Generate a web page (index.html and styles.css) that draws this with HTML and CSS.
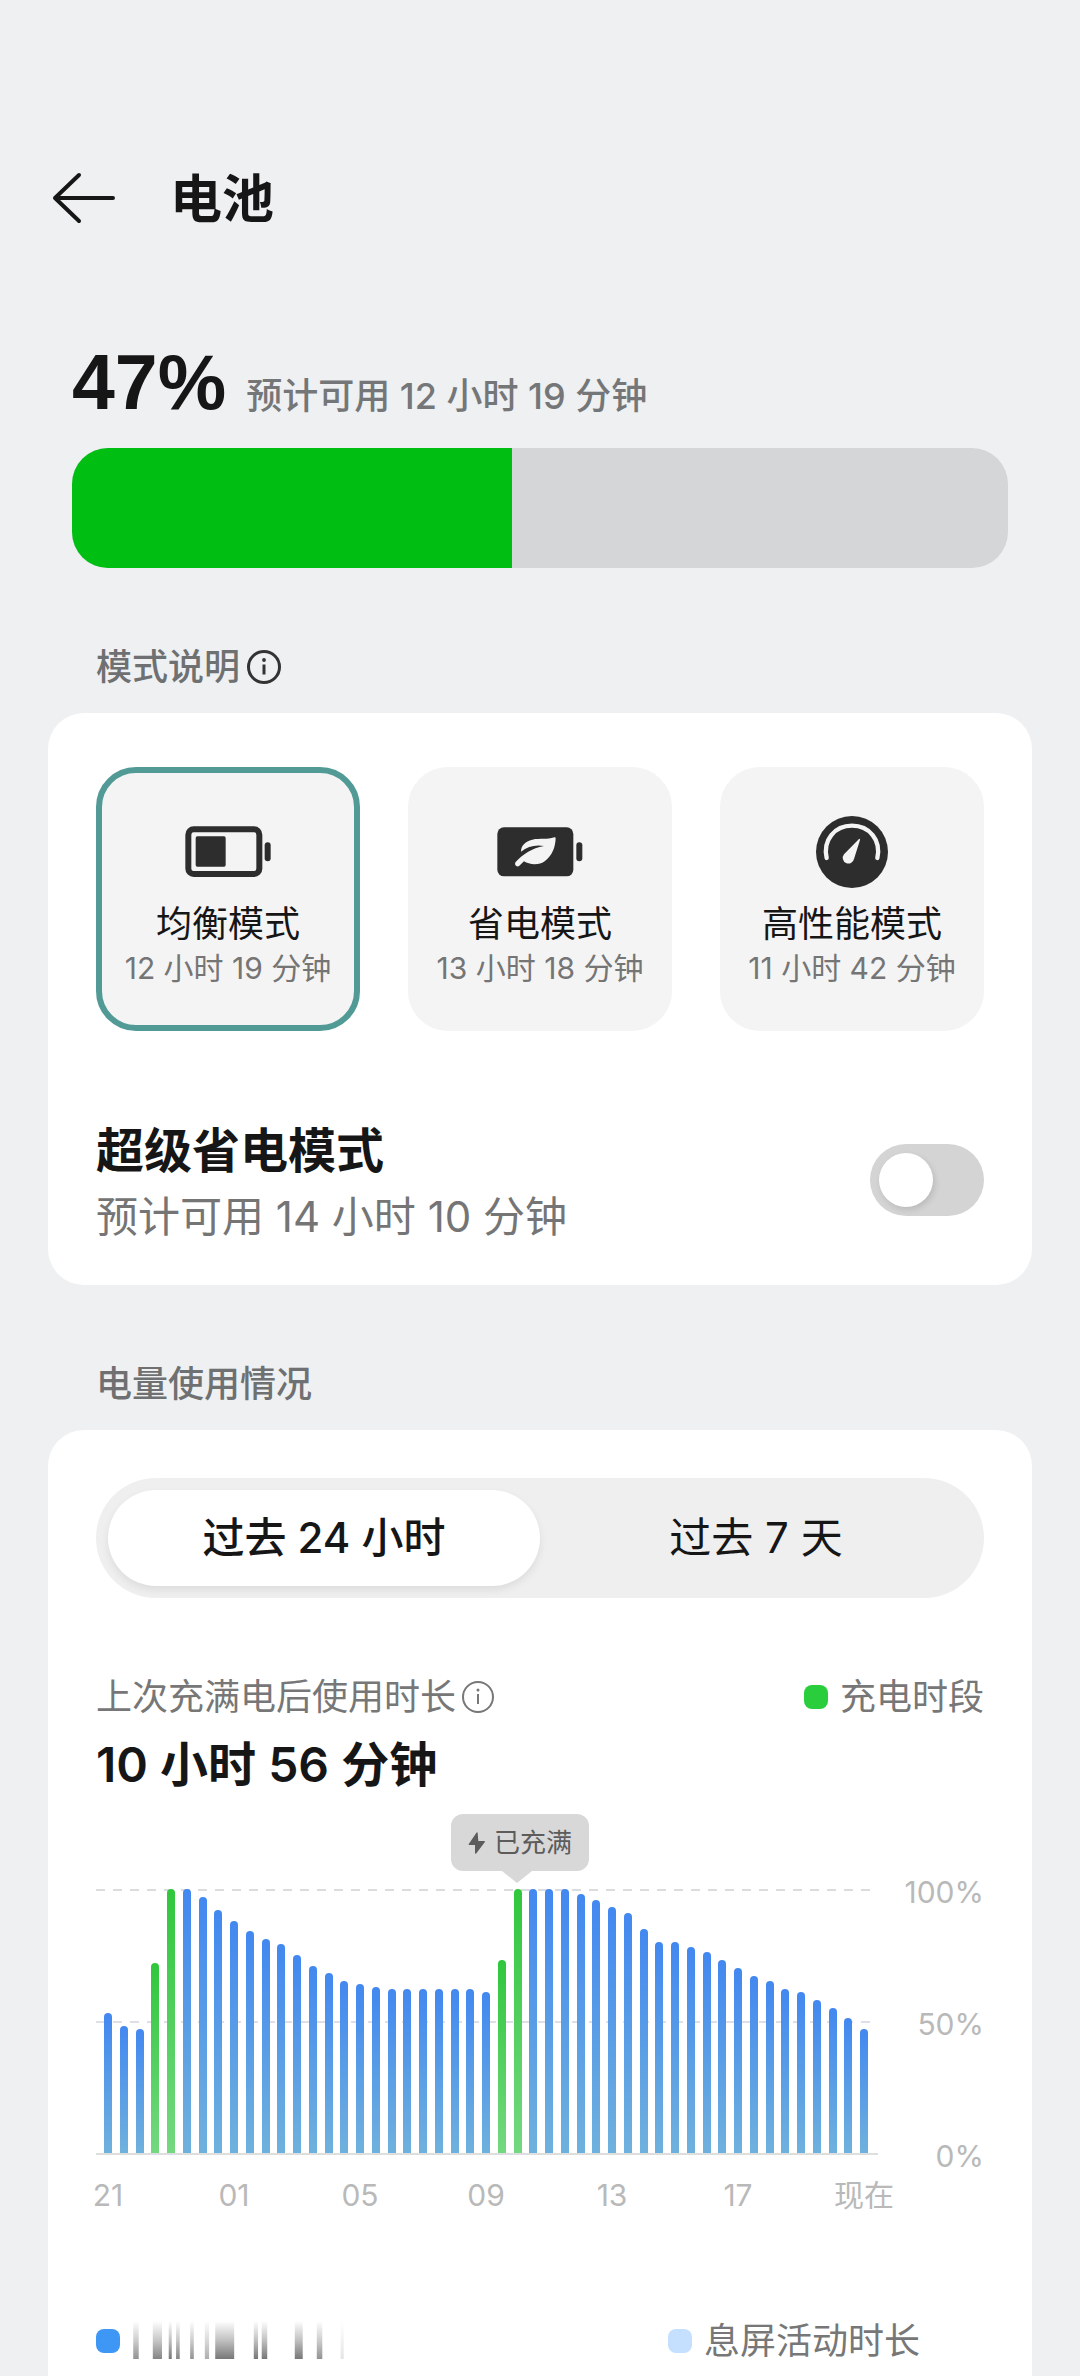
FILE: index.html
```html
<!DOCTYPE html>
<html lang="zh-CN">
<head>
<meta charset="utf-8">
<meta name="viewport" content="width=device-width, initial-scale=1">
<title>电池</title>
<link rel="stylesheet" href="styles.css">
</head>
<body>
<header class="topbar">
  <button class="icon-button back" type="button" aria-label="返回">
    <svg width="64" height="54" viewBox="0 0 64 54" fill="none" stroke="#161616" stroke-width="4" stroke-linecap="round" stroke-linejoin="round"><path d="M27 4 3 27l24 23M3 27h58"/></svg>
  </button>
  <h1 class="page-title">电池</h1>
</header>

<main class="content">
  <section class="level">
    <p class="level-text"><strong class="level-value">47%</strong><span class="level-note">预计可用 12 小时 19 分钟</span></p>
    <div class="level-bar" role="img" aria-label="电量 47%"><div class="level-fill" style="width:47%"></div></div>
  </section>

  <div class="section-head">
    <h2 class="section-title">模式说明</h2>
    <button class="icon-button" type="button" aria-label="模式说明信息">
      <svg width="36" height="36" viewBox="0 0 36 36" fill="none" stroke="#333" stroke-width="3"><circle cx="18" cy="18" r="15.5"/><path d="M18 15.500v10"/><circle cx="18" cy="11" r="1.900" fill="#333" stroke="none"/></svg>
    </button>
  </div>

  <section class="card">
    <div class="modes">
      <label class="mode">
        <input class="mode-input" type="radio" name="mode" checked>
        <span class="mode-icon">
          <svg width="86" height="52" viewBox="49 74 258 156"><rect x="59" y="84" width="213" height="134" rx="16" fill="none" stroke="#2d2d2d" stroke-width="18"/><rect x="81" y="105" width="90" height="91" rx="5" fill="#2d2d2d"/><rect x="288" y="123" width="18" height="57" rx="9" fill="#2d2d2d"/></svg>
        </span>
        <span class="mode-name">均衡模式</span>
        <span class="mode-time">12 小时 19 分钟</span>
      </label>
      <label class="mode">
        <input class="mode-input" type="radio" name="mode">
        <span class="mode-icon">
          <svg width="86" height="52" viewBox="56 74 258 156"><rect x="57" y="78" width="228" height="147" rx="20" fill="#2d2d2d"/><rect x="294" y="123" width="18" height="57" rx="9" fill="#2d2d2d"/><path fill="#f4f4f4" d="M228 108C206 116 186 110 162 115 140 120 128 133 128 151 148 135 172 129 197 134 160 141 136 157 112 182 106 189 116 200 123 193L137 180C153 191 184 192 200 179 222 162 231 138 232 110Q231 107 228 108Z"/></svg>
        </span>
        <span class="mode-name">省电模式</span>
        <span class="mode-time">13 小时 18 分钟</span>
      </label>
      <label class="mode">
        <input class="mode-input" type="radio" name="mode">
        <span class="mode-icon">
          <svg width="72" height="72" viewBox="1008 48 216 216"><circle cx="1116" cy="156" r="108" fill="#2d2d2d"/><path d="M1040 174C1028 120 1064 77 1116 77S1204 120 1192 174" fill="none" stroke="#f4f4f4" stroke-width="13" stroke-linecap="round"/><path fill="#f4f4f4" d="M1137 117Q1140 115 1140 120L1122 177A17 17 0 1 1 1092 163Z"/></svg>
        </span>
        <span class="mode-name">高性能模式</span>
        <span class="mode-time">11 小时 42 分钟</span>
      </label>
    </div>

    <label class="saver">
      <span class="saver-text">
        <span class="saver-title">超级省电模式</span>
        <span class="saver-note">预计可用 14 小时 10 分钟</span>
      </span>
      <input class="switch" type="checkbox" role="switch">
    </label>
  </section>

  <div class="section-head usage-head">
    <h2 class="section-title">电量使用情况</h2>
  </div>

  <section class="card usage">
    <div class="segments" role="tablist">
      <button class="segment active" type="button" role="tab" aria-selected="true">过去 24 小时</button>
      <button class="segment" type="button" role="tab" aria-selected="false">过去 7 天</button>
    </div>

    <div class="summary">
      <div class="summary-label">
        <span>上次充满电后使用时长</span>
        <button class="icon-button" type="button" aria-label="使用时长信息">
          <svg width="36" height="36" viewBox="0 0 36 36" fill="none" stroke="#777" stroke-width="2"><circle cx="18" cy="18" r="15"/><path d="M18 15v10"/><circle cx="18" cy="11" r="1.500" fill="#777" stroke="none"/></svg>
        </button>
      </div>
      <div class="legend"><span class="swatch charging"></span><span>充电时段</span></div>
    </div>
    <p class="summary-value">10 小时 56 分钟</p>

    <div class="chart">
      <div class="plot">
        <svg class="grid-lines" aria-hidden="true"><line x1="0" y1="1" x2="775" y2="1" stroke="#dcdcdf" stroke-width="2" stroke-dasharray="9 8"/><line x1="0" y1="133" x2="775" y2="133" stroke="#dfdfe8" stroke-width="2" stroke-dasharray="9 8"/></svg>
        <div class="bars" id="bars"></div>
        <div class="tooltip">
          <svg width="18" height="22" viewBox="1166 97 52 66" fill="#5c5c5c" stroke="#5c5c5c" stroke-width="4" stroke-linejoin="round"><path d="M1192 100 1169 134H1188V160L1214 126H1194Z"/></svg>
          <span>已充满</span>
        </div>
      </div>
      <div class="y-axis"><span>100%</span><span>50%</span><span>0%</span></div>
    </div>
    <div class="x-axis"><span>21</span><span>01</span><span>05</span><span>09</span><span>13</span><span>17</span><span>现在</span></div>

    <div class="totals">
      <div class="legend">
        <span class="swatch screen-on"></span>
        <svg class="smear" width="216" height="40" viewBox="120 120 353 120" preserveAspectRatio="none" role="img" aria-label="亮屏时长">
          <defs><linearGradient id="fade" x1="0" y1="120" x2="0" y2="234" gradientUnits="userSpaceOnUse"><stop offset="0" stop-color="#777" stop-opacity="0"/><stop offset=".5" stop-color="#777" stop-opacity=".45"/><stop offset="1" stop-color="#777"/></linearGradient></defs>
          <g fill="url(#fade)"><rect x="122" y="120" width="9" height="114" opacity=".8"/><rect x="154" y="120" width="15" height="114" opacity=".9"/><rect x="180" y="120" width="5" height="114"/><rect x="192" y="120" width="6" height="114" opacity=".9"/><rect x="215" y="120" width="6" height="114" opacity=".8"/><rect x="239" y="120" width="7" height="114" opacity=".6"/><rect x="256" y="120" width="31" height="114"/><rect x="319" y="120" width="7" height="114"/><rect x="332" y="120" width="9" height="114"/><rect x="386" y="120" width="13" height="114"/><rect x="422" y="120" width="9" height="114" opacity=".8"/><rect x="461" y="120" width="5" height="114" opacity=".2"/></g>
        </svg>
      </div>
      <div class="legend"><span class="swatch screen-off"></span><span>息屏活动时长</span></div>
    </div>
  </section>
</main>
<script src="chart.js"></script>
</body>
</html>
```
FILE: styles.css
```css
* {
  box-sizing: border-box;
}

body {
  margin: 0;
  min-height: 100vh;
  display: flex;
  flex-direction: column;
  background: #eef0f2;
  color: #161616;
  font-family: Inter, "Noto Sans CJK SC", sans-serif;
  font-size: 36px;
  line-height: 48px;
}

h1, h2, p {
  margin: 0;
}

button {
  font: inherit;
  color: inherit;
  border: 0;
  padding: 0;
  background: none;
}

svg {
  display: block;
}

.icon-button {
  display: flex;
}

.topbar {
  display: flex;
  align-items: center;
  gap: 54px;
  padding: 162px 52px 0;
}

.page-title {
  padding-top: 4px;
  font-size: 52px;
  line-height: 68px;
  font-weight: 600;
}

.content {
  flex: 1;
  display: flex;
  flex-direction: column;
  padding: 0 48px;
}

.level {
  padding: 98px 24px 0;
}

.level-text {
  display: flex;
  align-items: baseline;
  gap: 20px;
  line-height: 100px;
}

.level-value {
  font-family: "Liberation Sans", sans-serif;
  font-size: 77px;
  font-weight: 700;
}

.level-note {
  font-weight: 500;
  color: #757677;
}

.level-bar {
  height: 120px;
  margin-top: 2px;
  border-radius: 36px;
  background: #d5d6d8;
  overflow: hidden;
}

.level-fill {
  height: 100%;
  background: #00be12;
}

.section-head {
  display: flex;
  align-items: center;
  gap: 6px;
  padding: 75px 48px 22px;
}

.section-title {
  font-size: 36px;
  font-weight: 500;
  color: #6f7071;
}

.card {
  padding: 54px 48px 0;
  border-radius: 36px;
  background: #fff;
}

.modes {
  display: grid;
  grid-template-columns: repeat(3, 1fr);
  gap: 48px;
}

.mode {
  display: flex;
  flex-direction: column;
  align-items: center;
  height: 264px;
  padding-top: 43px;
  border: 6px solid #f4f4f4;
  border-radius: 40px;
  background: #f4f4f4;
}

.mode:has(:checked) {
  border-color: #519a96;
}

.mode-input {
  position: absolute;
  opacity: 0;
}

.mode-icon {
  height: 72px;
  display: flex;
  align-items: center;
}

.mode-name {
  margin-top: 12px;
}

.mode-time {
  font-size: 30px;
  line-height: 40px;
  color: #757575;
}

.saver {
  display: flex;
  align-items: center;
  justify-content: space-between;
  padding: 80px 0 36px;
}

.saver-text {
  display: flex;
  flex-direction: column;
  gap: 2px;
  padding-top: 8px;
}

.saver-title {
  font-size: 48px;
  line-height: 64px;
  font-weight: 600;
}

.saver-note {
  font-size: 42px;
  line-height: 64px;
  color: #757575;
}

.switch {
  appearance: none;
  width: 114px;
  height: 72px;
  margin: 0;
  padding: 9px;
  border-radius: 36px;
  background: #d4d4d4;
}

.switch::before {
  content: "";
  display: block;
  width: 54px;
  height: 54px;
  border-radius: 50%;
  background: #fff;
  box-shadow: 2px 3px 6px rgba(0, 0, 0, .12);
}

.usage {
  flex: 1;
  padding-top: 48px;
  border-radius: 36px 36px 0 0;
}

.segments {
  display: grid;
  grid-template-columns: 1fr 1fr;
  height: 120px;
  padding: 12px;
  border-radius: 60px;
  background: #efefef;
}

.segment {
  border-radius: 48px;
  font-size: 42px;
}

.segment.active {
  background: #fff;
  font-weight: 500;
  box-shadow: 0 4px 8px rgba(0, 0, 0, .08);
}

.summary {
  display: flex;
  justify-content: space-between;
  margin-top: 75px;
  color: #777;
}

.summary-label {
  display: flex;
  align-items: center;
  gap: 4px;
}

.legend {
  display: flex;
  align-items: center;
  gap: 12px;
}

.swatch {
  width: 24px;
  height: 24px;
  border-radius: 8px;
}

.charging {
  background: #2ace3c;
}

.screen-on {
  background: #3e97f5;
}

.screen-off {
  background: #c5dfff;
}

.summary-value {
  margin-top: 12px;
  font-size: 48px;
  line-height: 64px;
  font-weight: 600;
}

.chart {
  display: flex;
  justify-content: space-between;
  margin-top: 92px;
}

.plot {
  position: relative;
  flex: 0 1 782px;
  height: 266px;
  border-bottom: 2px solid #dcdee0;
}

.grid-lines {
  position: absolute;
  inset: 0;
  width: 100%;
  height: 100%;
}

.bars {
  position: relative;
  display: flex;
  align-items: flex-end;
  justify-content: space-between;
  height: 264px;
  padding: 0 10px 0 8px;
}

.bar {
  width: 8px;
  border-radius: 4px 4px 0 0;
  background: linear-gradient(#4288f0, #6fb1dd);
}

.bar.charge {
  background: linear-gradient(#30c73c, #74d880);
}

.tooltip {
  position: absolute;
  left: 355px;
  bottom: 282px;
  display: flex;
  align-items: center;
  gap: 8px;
  height: 57px;
  padding: 0 17px;
  border-radius: 12px;
  background: #d8d8d8;
  color: #5c5c5c;
  font-size: 26px;
}

.tooltip::after {
  content: "";
  position: absolute;
  left: 51px;
  top: 100%;
  border: 15px solid transparent;
  border-top: 12px solid #d8d8d8;
  border-bottom: 0;
}

.y-axis {
  display: flex;
  flex-direction: column;
  justify-content: space-between;
  margin: -17px 0 -21px;
  font-size: 30px;
  line-height: 40px;
  text-align: right;
  color: #b9b9b9;
}

.x-axis {
  display: flex;
  justify-content: space-between;
  margin: 20px 90px 0 -18px;
  font-size: 30px;
  line-height: 40px;
  color: #b9b9b9;
}

.x-axis span {
  width: 60px;
  text-align: center;
}

.totals {
  display: grid;
  grid-template-columns: 572px 1fr;
  margin-top: 102px;
  color: #777;
}
```
FILE: chart.js
```js
// Battery level for every half hour, in percent.
const levels = [
  53, 48, 47, 72, 100, 100, 97, 92, 88, 84, 81, 79, 75, 71, 68, 65, 64, 63,
  62, 62, 62, 62, 62, 62, 61, 73, 100, 100, 100, 100, 98, 96, 93, 91, 85,
  80, 80, 78, 76, 73, 70, 67, 65, 62, 61, 58, 55, 51, 47
];
const charging = new Set([3, 4, 25, 26]);

const bars = document.getElementById("bars");
levels.forEach((level, i) => {
  const bar = document.createElement("div");
  bar.className = charging.has(i) ? "bar charge" : "bar";
  bar.style.height = level + "%";
  bars.append(bar);
});
```
